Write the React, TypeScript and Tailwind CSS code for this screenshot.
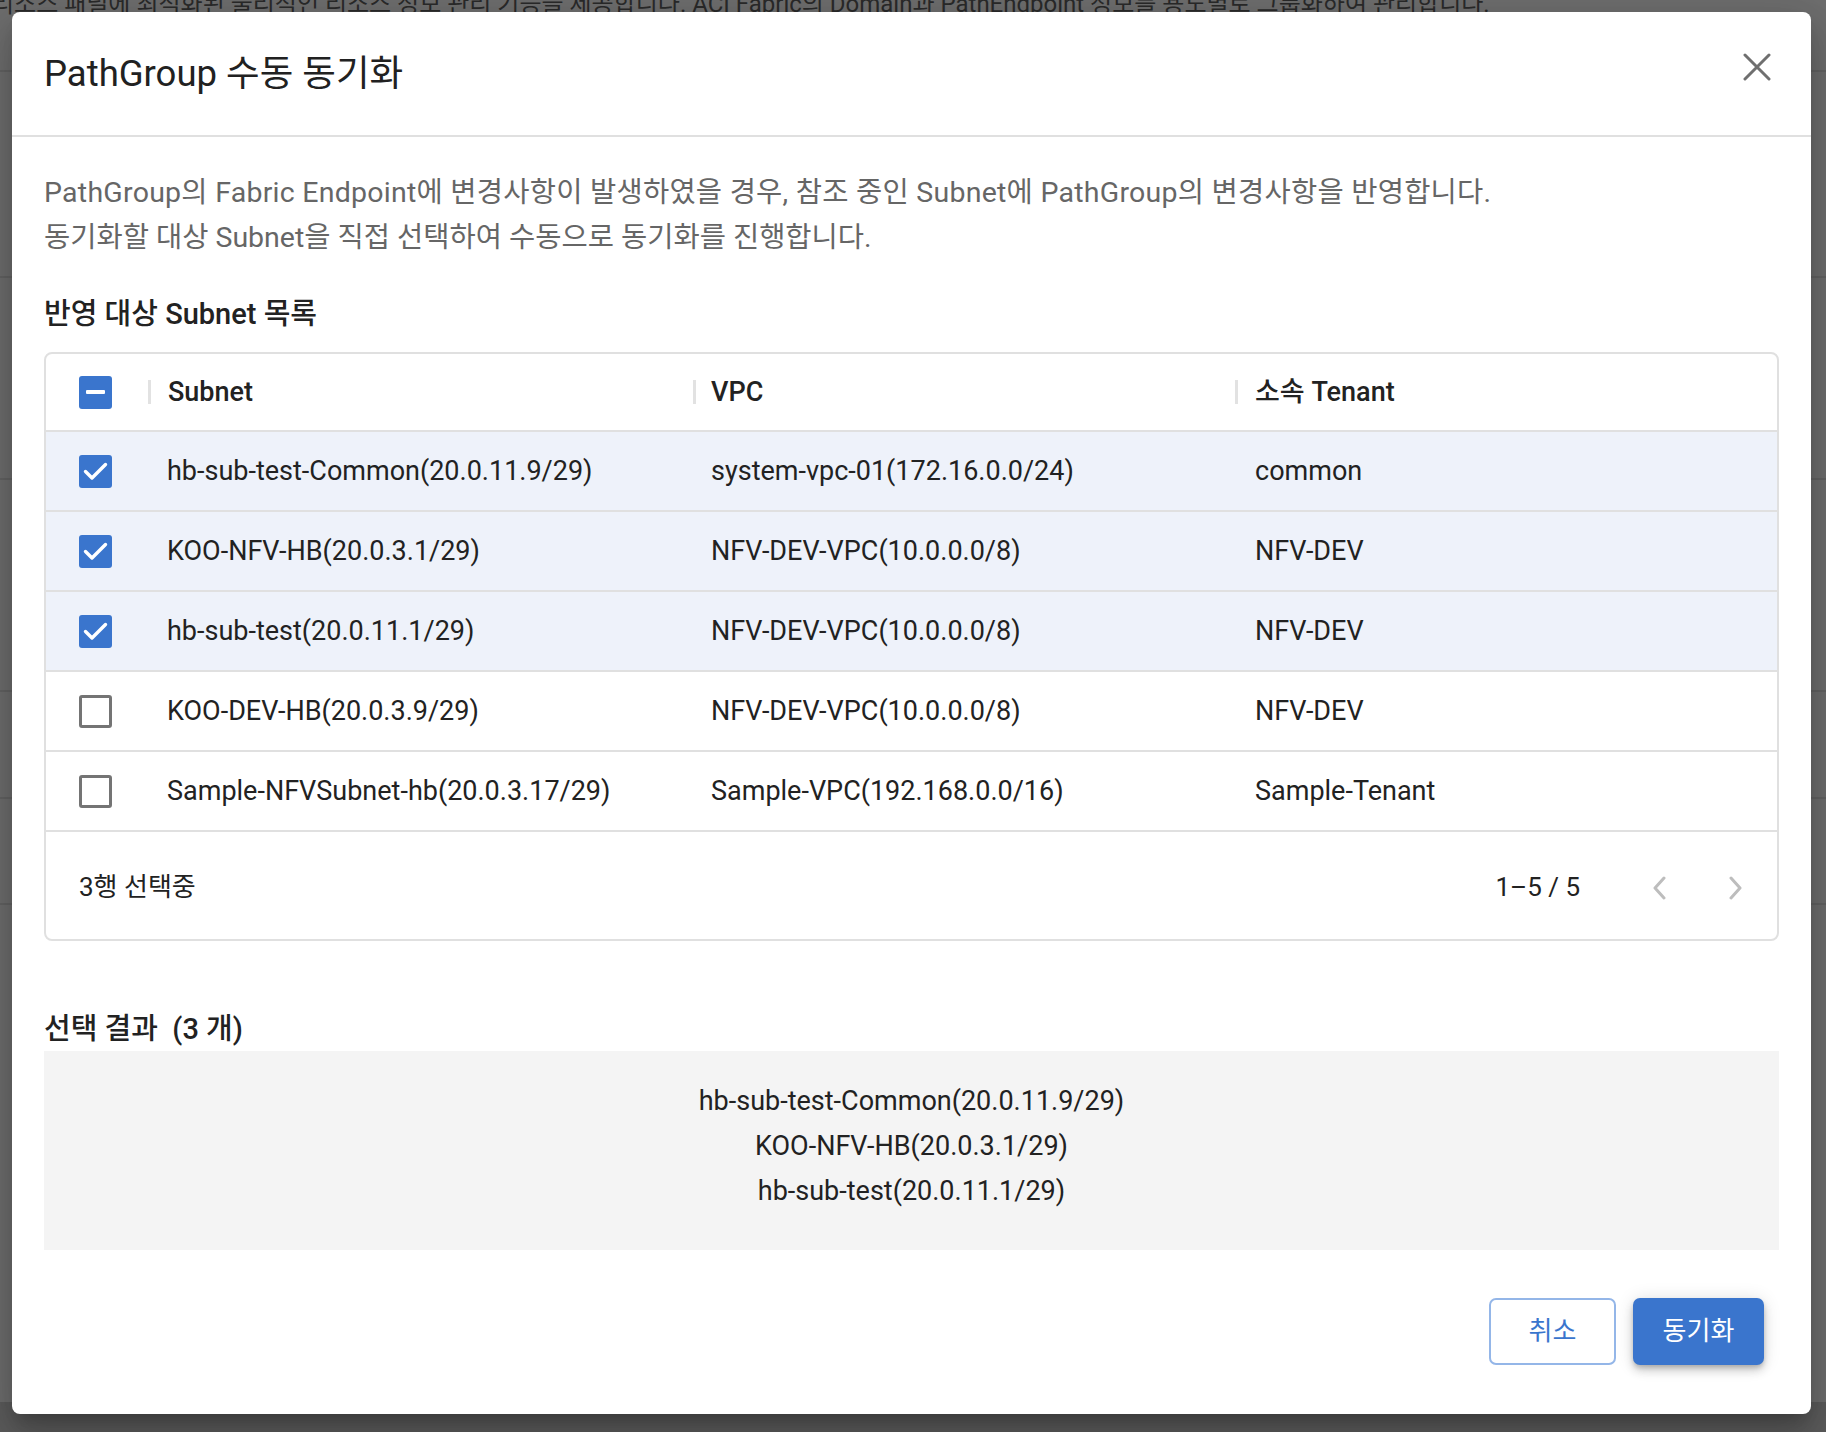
import React from "react";

const rows = [
  { subnet: "hb-sub-test-Common(20.0.11.9/29)", vpc: "system-vpc-01(172.16.0.0/24)", tenant: "common", checked: true },
  { subnet: "KOO-NFV-HB(20.0.3.1/29)", vpc: "NFV-DEV-VPC(10.0.0.0/8)", tenant: "NFV-DEV", checked: true },
  { subnet: "hb-sub-test(20.0.11.1/29)", vpc: "NFV-DEV-VPC(10.0.0.0/8)", tenant: "NFV-DEV", checked: true },
  { subnet: "KOO-DEV-HB(20.0.3.9/29)", vpc: "NFV-DEV-VPC(10.0.0.0/8)", tenant: "NFV-DEV", checked: false },
  { subnet: "Sample-NFVSubnet-hb(20.0.3.17/29)", vpc: "Sample-VPC(192.168.0.0/16)", tenant: "Sample-Tenant", checked: false },
];

function Checkbox({ state }: { state: "checked" | "unchecked" | "indeterminate" }) {
  if (state === "unchecked") {
    return <div className="h-[33px] w-[33px] rounded-[3px] border-[3px] border-[#747474] bg-white" />;
  }
  return (
    <div className="flex h-[33px] w-[33px] items-center justify-center rounded-[3px] bg-[#3a75cd]">
      {state === "checked" ? (
        <svg width="33" height="33" viewBox="0 0 33 33" fill="none">
          <path d="M6.5 16.5l6.5 6.5L26.5 9.5" stroke="white" strokeWidth="3.4" strokeLinecap="round" strokeLinejoin="round" />
        </svg>
      ) : (
        <div className="h-[4px] w-[19px] rounded-[1px] bg-white" />
      )}
    </div>
  );
}

function Sep() {
  return <div className="h-[24px] w-[3px] bg-[#e2e2e2]" />;
}

export default function App() {
  return (
    <div className="relative h-[1432px] w-[1826px] overflow-hidden bg-[#6e6e6e] font-['Roboto','Noto_Sans_CJK_KR',sans-serif]">
      {/* backdrop page hints */}
      <div className="absolute left-[-8px] top-[-14px] whitespace-nowrap text-[24px] text-[#2a2a2a]">
        리소스 패널에 최적화된 물리적인 리소스 정보 관리 기능을 제공합니다. ACI Fabric의 Domain과 PathEndpoint 정보를 용도별로 그룹화하여 관리합니다.
      </div>
      <div className="absolute left-0 top-[70px] h-[2px] w-full bg-[#636363]" />
      <div className="absolute left-0 top-[276px] h-[2px] w-full bg-[#636363]" />
      <div className="absolute left-0 top-[478px] h-[2px] w-full bg-[#636363]" />
      <div className="absolute left-0 top-[690px] h-[2px] w-full bg-[#636363]" />
      <div className="absolute left-0 top-[797px] h-[2px] w-full bg-[#636363]" />
      <div className="absolute left-0 top-[903px] h-[2px] w-full bg-[#636363]" />
      <div className="absolute bottom-0 left-0 h-[30px] w-full bg-[#5c5c5c]" />

      {/* modal */}
      <div className="absolute left-[12px] top-[12px] flex h-[1402px] w-[1799px] flex-col rounded-[8px] bg-white shadow-[0_11px_15px_-7px_rgba(0,0,0,0.2),0_24px_38px_3px_rgba(0,0,0,0.14),0_9px_46px_8px_rgba(0,0,0,0.12)]">
        {/* header */}
        <div className="flex h-[125px] shrink-0 items-center justify-between border-b-[2px] border-[#e0e0e0] pl-[32px] pr-[40px]">
          <div className="pt-[2px] text-[36.5px] leading-none text-[#212121]">PathGroup 수동 동기화</div>
          <svg className="mb-[14px]" width="28" height="28" viewBox="0 0 28 28" fill="none">
            <path d="M2 2L26 26M26 2L2 26" stroke="#6f6f6f" strokeWidth="3" strokeLinecap="round" />
          </svg>
        </div>

        {/* body */}
        <div className="flex flex-1 flex-col pl-[32px] pr-[32px]">
          <div className="mt-[33px] text-[28.5px] leading-[45px] text-[#666666]">
            <div className="tracking-[0.25px]">PathGroup의 Fabric Endpoint에 변경사항이 발생하였을 경우, 참조 중인 Subnet에 PathGroup의 변경사항을 반영합니다.</div>
            <div>동기화할 대상 Subnet을 직접 선택하여 수동으로 동기화를 진행합니다.</div>
          </div>

          <div className="mt-[34px] text-[29px] font-medium leading-[40px] text-[#222222]">반영 대상 Subnet 목록</div>

          {/* table */}
          <div className="mt-[18px] overflow-hidden rounded-[8px] border-[2px] border-[#e0e0e0]">
            <div className="grid h-[78px] grid-cols-[102px_545px_542px_1fr] items-center border-b-[2px] border-[#e0e0e0] text-[27px] font-medium text-[#222222]">
              <div className="flex justify-end pr-[36px]">
                <Checkbox state="indeterminate" />
              </div>
              <div className="flex items-center gap-[17px]">
                <Sep />
                <span>Subnet</span>
              </div>
              <div className="flex items-center gap-[15px]">
                <Sep />
                <span>VPC</span>
              </div>
              <div className="flex items-center gap-[17px]">
                <Sep />
                <span>소속 Tenant</span>
              </div>
            </div>
            {rows.map((r, i) => (
              <div
                key={i}
                className={
                  "grid h-[80px] grid-cols-[102px_545px_542px_1fr] items-center border-b-[2px] border-[#e0e0e0] text-[27px] text-[#222222] " +
                  (r.checked ? "bg-[#eef2fa]" : "bg-white")
                }
              >
                <div className="flex justify-end pr-[36px]">
                  <Checkbox state={r.checked ? "checked" : "unchecked"} />
                </div>
                <div className="pl-[19px]">{r.subnet}</div>
                <div className="pl-[18px]">{r.vpc}</div>
                <div className="pl-[20px]">{r.tenant}</div>
              </div>
            ))}
            <div className="flex h-[107px] items-center justify-between pl-[33px] pr-[34px] pt-[4px] text-[26px] text-[#222222]">
              <span>3행 선택중</span>
              <div className="flex items-center">
                <span>1–5 / 5</span>
                <svg className="ml-[72px]" width="14" height="24" viewBox="0 0 14 24" fill="none">
                  <path d="M12 2L3 12l9 10" stroke="#bdbdbd" strokeWidth="3" strokeLinecap="round" strokeLinejoin="round" />
                </svg>
                <svg className="ml-[63px]" width="14" height="24" viewBox="0 0 14 24" fill="none">
                  <path d="M2 2l9 10-9 10" stroke="#bdbdbd" strokeWidth="3" strokeLinecap="round" strokeLinejoin="round" />
                </svg>
              </div>
            </div>
          </div>

          <div className="mt-[68px] whitespace-pre text-[29px] font-medium leading-[40px] text-[#222222]">
            {"선택 결과  (3 개)"}
          </div>

          <div className="mt-[2px] flex h-[199px] flex-col items-center justify-center bg-[#f4f4f4] pb-[8px] text-[27px] leading-[45px] text-[#222222]">
            <div>hb-sub-test-Common(20.0.11.9/29)</div>
            <div>KOO-NFV-HB(20.0.3.1/29)</div>
            <div>hb-sub-test(20.0.11.1/29)</div>
          </div>

          <div className="mt-[48px] flex justify-end gap-[17px] pr-[15px]">
            <button className="h-[67px] w-[127px] rounded-[7px] border-[2px] border-[#94b6e8] bg-white text-[26px] text-[#3a75cd]">
              취소
            </button>
            <button className="h-[67px] w-[131px] rounded-[7px] bg-[#3a75cd] text-[26px] text-white shadow-[0_3px_5px_-1px_rgba(0,0,0,0.2),0_6px_10px_0_rgba(0,0,0,0.14),0_1px_18px_0_rgba(0,0,0,0.12)]">
              동기화
            </button>
          </div>
        </div>
      </div>
    </div>
  );
}
